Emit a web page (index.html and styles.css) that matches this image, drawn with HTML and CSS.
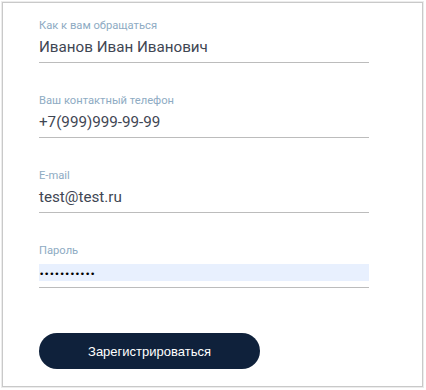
FILE: index.html
```html
<!DOCTYPE html>
<html lang="ru">
<head>
<meta charset="utf-8">
<link rel="stylesheet" href="styles.css">
</head>
<body>
<div class="card">
  <form class="form">
    <div class="field">
      <div class="label">Как к вам обращаться</div>
      <div class="input"><div class="value">Иванов Иван Иванович</div></div>
    </div>
    <div class="field">
      <div class="label">Ваш контактный телефон</div>
      <div class="input"><div class="value">+7(999)999-99-99</div></div>
    </div>
    <div class="field">
      <div class="label">E-mail</div>
      <div class="input"><div class="value">test@test.ru</div></div>
    </div>
    <div class="field">
      <div class="label">Пароль</div>
      <div class="input"><div class="value autofill"><span class="dots">•••••••••••</span></div></div>
    </div>
    <button type="button" class="btn">Зарегистрироваться</button>
  </form>
</div>
</body>
</html>
```
FILE: styles.css
```css
html, body {
  margin: 0;
  padding: 0;
  background: #ffffff;
}
.card {
  box-sizing: border-box;
  width: 421px;
  height: 385px;
  margin: 2px;
  border: 1px solid #c9c9c9;
  box-shadow: 0 0 0 1px #ececec;
  background: #fff;
  padding: 16px 0 0 36px;
}
.form {
  width: 330px;
  display: flex;
  flex-direction: column;
}
.field {
  margin-bottom: 31px;
}
.label {
  font-family: Roboto, "Liberation Sans", sans-serif;
  font-size: 11.2px;
  line-height: 14px;
  color: #8eabc3;
}
.input {
  margin-top: 6px;
  padding-bottom: 6px;
  border-bottom: 1px solid #bcbcbc;
}
.value {
  height: 17px;
  line-height: 17px;
  font-family: Roboto, "Liberation Sans", sans-serif;
  font-size: 15.2px;
  color: #3f4653;
  white-space: nowrap;
}
.autofill {
  background: #e8f0fe;
}
.dots {
  font-family: "DejaVu Sans", sans-serif;
  font-size: 9px;
  letter-spacing: -0.2px;
  color: #000;
}
.btn {
  margin-top: 14px;
  width: 221px;
  height: 36px;
  border: none;
  border-radius: 18px;
  background: #0f213b;
  color: #ffffff;
  font-family: "Liberation Sans", Arial, sans-serif;
  font-size: 13px;
  letter-spacing: 0;
  padding: 0;
  cursor: pointer;
}
```
